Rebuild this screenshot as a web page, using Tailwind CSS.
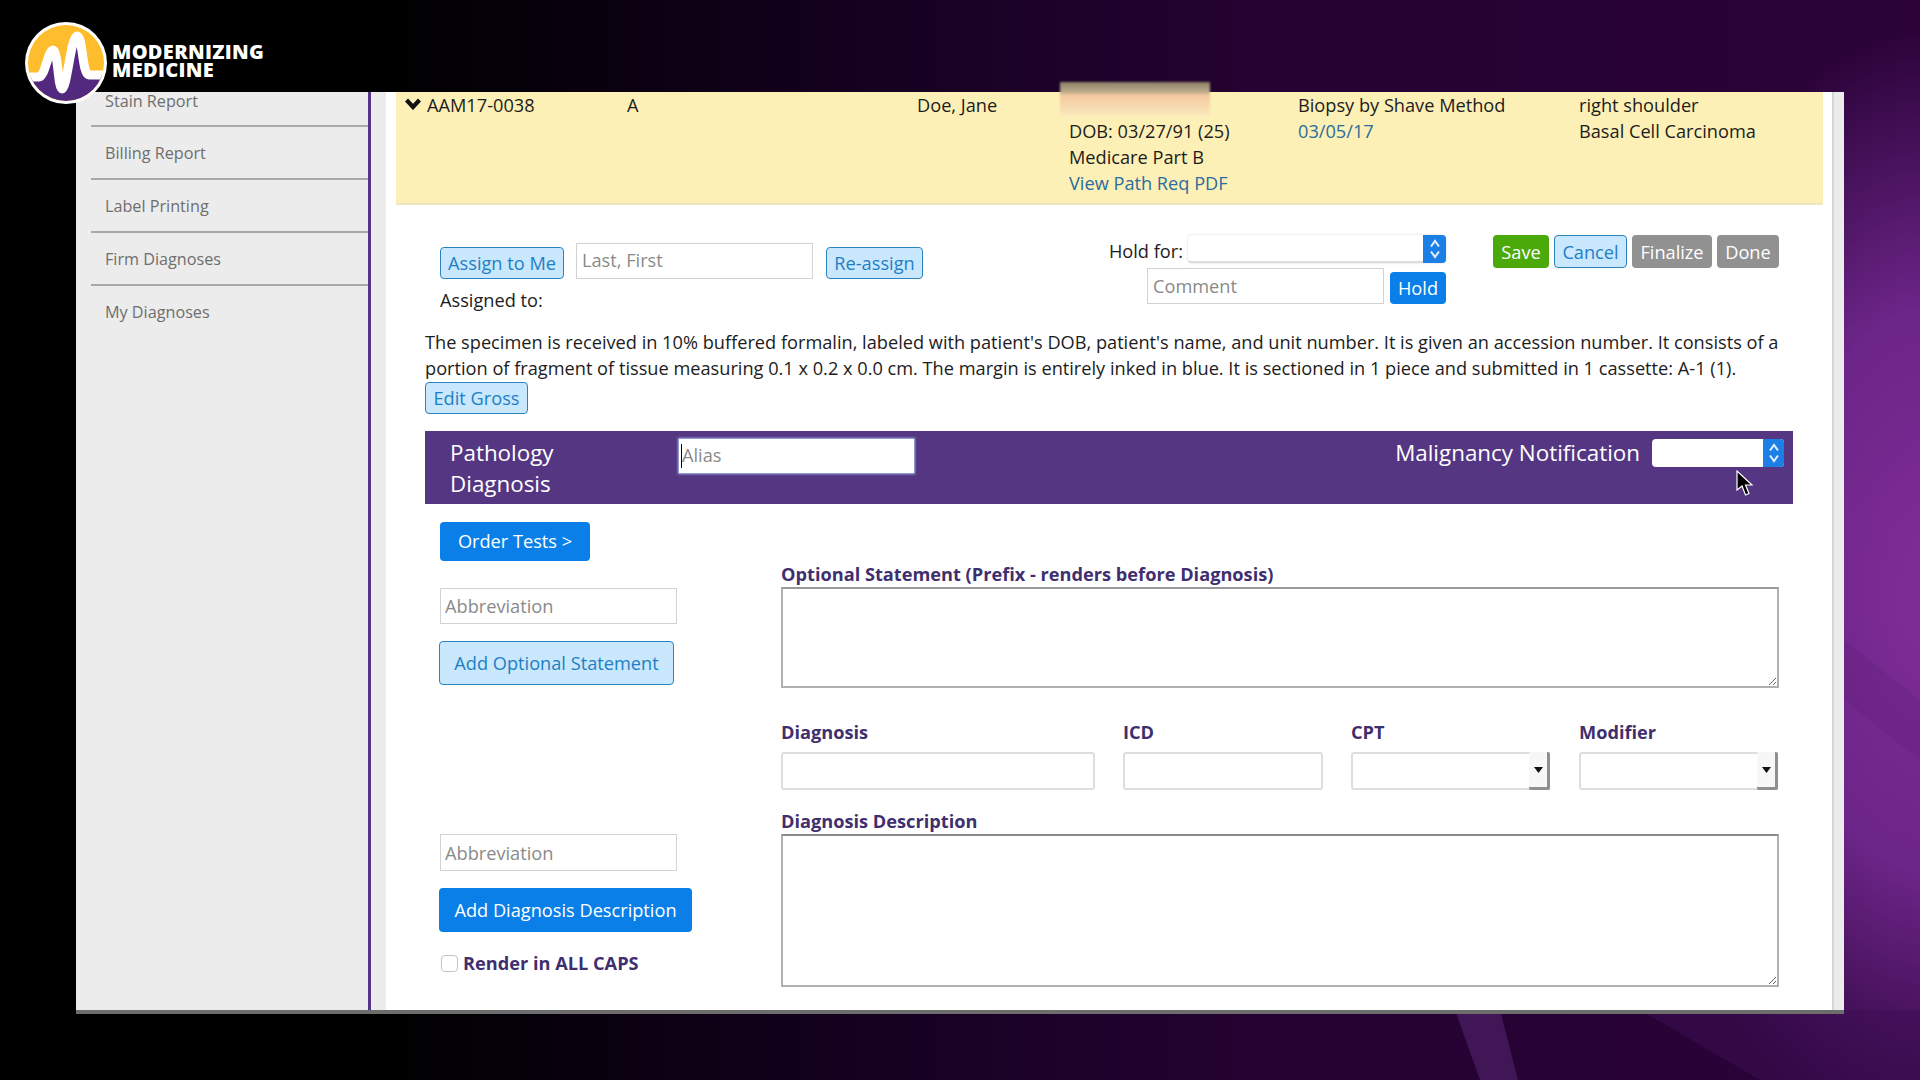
<!DOCTYPE html>
<html lang="en">
<head>
  <meta charset="UTF-8" />
  <meta name="viewport" content="width=device-width, initial-scale=1.0"/>
  <title>Pathology Diagnosis</title>
  <script src="https://cdn.jsdelivr.net/npm/@tailwindcss/browser@4"></script>
</head>
<body class="relative w-[1920px] h-[1080px] overflow-hidden font-['Open_Sans',sans-serif] text-[18.2px] leading-[26px] text-[#1c1c1c] bg-[radial-gradient(ellipse_300px_560px_at_1930px_590px,#7f2d98_0%,#6c2588_50%,transparent_100%),linear-gradient(90deg,#000_0%,#000_20%,#150120_45%,#240231_65%,#2b0339_100%)]">

  <!-- wallpaper streaks -->
  <svg class="absolute left-0 top-0" width="1920" height="1080" viewBox="0 0 1920 1080" fill="none">
    <polygon points="1455,1010 1500,1010 1518,1080 1480,1080" fill="#401656"/>
    <polygon points="1640,1010 1920,1010 1920,1080 1760,1080" fill="#3c0e54" opacity="0.5"/>
    <polygon points="1844,520 1920,440 1920,560 1844,640" fill="#7a2d92" opacity="0.25"/>
    <polygon points="1844,640 1920,700 1920,760 1844,700" fill="#5e2078" opacity="0.3"/>
  </svg>

  <!-- window -->
  <div class="relative ml-[76px] pt-[92px] w-[1768px] h-[1014px]">
    <div class="flex h-[922px] border-b-4 border-[#6d6d6d] bg-white">

      <!-- sidebar -->
      <div class="w-[292px] shrink-0 bg-[#ececec] pl-[15px] text-[16.2px] text-[#6e6e6e]">
        <div class="h-[35px] pl-[14px] border-b-2 border-[#a9a9a9] leading-[18px]">Stain Report</div>
        <div class="h-[53px] pl-[14px] flex items-center border-b-2 border-[#a9a9a9]">Billing Report</div>
        <div class="h-[53px] pl-[14px] flex items-center border-b-2 border-[#a9a9a9]">Label Printing</div>
        <div class="h-[53px] pl-[14px] flex items-center border-b-2 border-[#a9a9a9]">Firm Diagnoses</div>
        <div class="h-[52px] pl-[14px] flex items-center">My Diagnoses</div>
      </div>
      <div class="w-[3px] shrink-0 bg-[#553682]"></div>
      <div class="w-[15px] shrink-0 bg-[#ececec]"></div>

      <!-- main -->
      <div class="w-[1446px] shrink-0 overflow-hidden">
        <!-- case banner -->
        <div class="ml-[10px] w-[1427px] h-[113px] pl-[9px] flex bg-[#fdf0b6] border-b-2 border-[#efe6bd]">
          <div class="w-[222px] flex items-start">
            <svg class="mt-[6px] mr-[6px]" width="16" height="12" viewBox="0 0 16 12"><path d="M1.5 2 L8 9 L14.5 2" fill="none" stroke="#111" stroke-width="4.2"/></svg>
            <span>AAM17-0038</span>
          </div>
          <div class="w-[290px]">A</div>
          <div class="w-[152px]">Doe, Jane</div>
          <div class="w-[229px] pt-[26px]">
            <div>DOB: 03/27/91 (25)</div>
            <div>Medicare Part B</div>
            <div class="text-[#2a6d9e]">View Path Req PDF</div>
          </div>
          <div class="w-[281px]">
            <div>Biopsy by Shave Method</div>
            <div class="text-[#2a6d9e]">03/05/17</div>
          </div>
          <div>
            <div>right shoulder</div>
            <div>Basal Cell Carcinoma</div>
          </div>
        </div>

        <!-- assign / hold / actions -->
        <div class="mt-[30px] h-[94px] pl-[54px] flex items-start">
          <div class="w-[483px] pt-[8px]">
            <div class="flex items-end">
              <button class="w-[124px] h-[32px] rounded bg-[#c9e7fd] border border-[#2b84bd] text-[#1e7fc4]">Assign to Me</button>
              <input class="ml-[12px] w-[237px] h-[36px] px-[5px] pb-[2px] bg-white border border-[#d2d2d2] outline-none placeholder:text-[#8a8a8a]" placeholder="Last, First" />
              <button class="ml-[13px] w-[97px] h-[32px] rounded bg-[#c9e7fd] border border-[#2b84bd] text-[#1e7fc4]">Re-assign</button>
            </div>
            <div class="mt-[8px]">Assigned to:</div>
          </div>
          <div class="ml-[185px] w-[338px]">
            <div class="flex justify-end items-center h-[28px]">
              <span class="mr-[5px] mt-[3px]">Hold for:</span>
              <div class="w-[258px] h-[28px] flex rounded-[4px] bg-white border-b-2 border-[#dcdcdc] shadow-[0_0_2px_#c8c8c8]">
                <div class="flex-1"></div>
                <div class="w-[23px] -mb-[2px] rounded-r-[4px] bg-[#1c7fe6] flex items-center justify-center">
                  <svg width="14" height="24" viewBox="0 0 14 24" fill="none" stroke="#e4f0ff" stroke-width="2"><path d="M3 9.5 L7 4 L11 9.5"/><path d="M3 14.5 L7 20 L11 14.5"/></svg>
                </div>
              </div>
            </div>
            <div class="mt-[5px] flex justify-end items-end">
              <input class="w-[237px] h-[36px] px-[5px] bg-white border border-[#d2d2d2] outline-none placeholder:text-[#8a8a8a]" placeholder="Comment" />
              <button class="ml-[6px] w-[56px] h-[32px] rounded bg-[#0a7fe8] text-white">Hold</button>
            </div>
          </div>
          <div class="ml-[47px] flex gap-[5px]">
            <button class="w-[56px] h-[33px] rounded bg-[#4ca90a] text-white">Save</button>
            <button class="w-[73px] h-[33px] rounded bg-[#c9e7fd] border border-[#2b84bd] text-[#1e7fc4]">Cancel</button>
            <button class="w-[80px] h-[33px] rounded bg-[#919191] text-white">Finalize</button>
            <button class="w-[62px] h-[33px] rounded bg-[#919191] text-white">Done</button>
          </div>
        </div>

        <!-- gross description -->
        <div class="ml-[39px] w-[1368px] whitespace-nowrap text-[#1c1c1c]">
          The specimen is received in 10% buffered formalin, labeled with patient's DOB, patient's name, and unit number. It is given an accession number. It consists of a<br/>
          portion of fragment of tissue measuring 0.1 x 0.2 x 0.0 cm. The margin is entirely inked in blue. It is sectioned in 1 piece and submitted in 1 cassette: A-1 (1).
        </div>
        <button class="ml-[39px] mt-[1px] block w-[103px] h-[32px] rounded bg-[#c9e7fd] border border-[#2b84bd] text-[#1e7fc4]">Edit Gross</button>

        <!-- pathology diagnosis bar -->
        <div class="ml-[39px] mt-[17px] w-[1368px] h-[73px] flex items-start bg-[#553682] text-white text-[22.4px] leading-[31px]">
          <div class="w-[254px] pl-[25px] pt-[6px]">Pathology<br/>Diagnosis</div>
          <div class="mt-[8px] w-[235px] h-[34px] flex items-center bg-white shadow-[0_0_2px_1px_#a9c6f5]">
            <span class="w-px h-[24px] ml-[2px] bg-black"></span>
            <input class="w-[220px] pb-[2px] text-[18.2px] text-[#1c1c1c] outline-none placeholder:text-[#8a8a8a]" placeholder="Alias" />
          </div>
          <div class="ml-auto mt-[6px] mr-[9px] flex items-start">
            <span class="mr-[12px]">Malignancy Notification</span>
            <div class="mt-[2px] w-[132px] h-[28px] flex rounded-[4px] bg-white">
              <div class="flex-1"></div>
              <div class="w-[21px] rounded-r-[4px] bg-[#1c7fe6] flex items-center justify-center">
                <svg width="14" height="24" viewBox="0 0 14 24" fill="none" stroke="#e4f0ff" stroke-width="2"><path d="M3 9.5 L7 4 L11 9.5"/><path d="M3 14.5 L7 20 L11 14.5"/></svg>
              </div>
            </div>
          </div>
        </div>

        <!-- diagnosis form -->
        <div class="flex items-start pl-[53px]">
          <div class="w-[342px] pt-[18px]">
            <button class="ml-[1px] block w-[150px] h-[39px] pb-[2px] rounded bg-[#0a7fe8] text-white">Order Tests &gt;</button>
            <input class="mt-[27px] ml-[1px] block w-[237px] h-[36px] px-[4px] bg-white border border-[#d2d2d2] outline-none placeholder:text-[#8a8a8a]" placeholder="Abbreviation" />
            <button class="mt-[17px] block w-[235px] h-[44px] rounded bg-[#c9e7fd] border border-[#2b84bd] text-[#1e7fc4]">Add Optional Statement</button>
            <input class="mt-[149px] ml-[1px] block w-[237px] h-[37px] px-[4px] bg-white border border-[#d2d2d2] outline-none placeholder:text-[#8a8a8a]" placeholder="Abbreviation" />
            <button class="mt-[17px] block w-[253px] h-[44px] rounded bg-[#0a7fe8] text-white">Add Diagnosis Description</button>
            <label class="mt-[18px] ml-[2px] flex items-center font-bold text-[#3f2f6e]">
              <input type="checkbox" class="w-[17px] h-[17px] mr-[5px] appearance-none rounded-[4px] bg-white border border-[#c4c4c4]" />
              Render in ALL CAPS
            </label>
          </div>
          <div class="w-[998px] pt-[58px] font-bold text-[#3f2f6e] leading-[24px]">
            <div>Optional Statement (Prefix - renders before Diagnosis)</div>
            <textarea class="mt-[1px] block w-[998px] h-[101px] bg-white border-2 border-[#b0b0b0] border-t-[#9a9a9a] outline-none"></textarea>
            <div class="mt-[32px] flex">
              <div class="w-[342px]">
                <div>Diagnosis</div>
                <input class="mt-[8px] block w-[314px] h-[38px] rounded-[3px] bg-white border-2 border-[#dedede] outline-none" />
              </div>
              <div class="w-[228px]">
                <div>ICD</div>
                <input class="mt-[8px] block w-[200px] h-[38px] rounded-[3px] bg-white border-2 border-[#dedede] outline-none" />
              </div>
              <div class="w-[228px]">
                <div>CPT</div>
                <div class="relative mt-[8px] w-[199px] h-[38px] rounded-[3px] bg-white border-2 border-[#dedede]">
                  <div class="absolute right-[-2px] top-[-2px] w-[21px] h-[38px] flex items-center justify-center bg-[#f7f7f7] border-r-[3px] border-b-[3px] border-[#8f8f8f] rounded-[2px]">
                    <svg width="9" height="6" viewBox="0 0 9 6"><polygon points="0,0 9,0 4.5,6" fill="#111"/></svg>
                  </div>
                </div>
              </div>
              <div>
                <div>Modifier</div>
                <div class="relative mt-[8px] w-[199px] h-[38px] rounded-[3px] bg-white border-2 border-[#dedede]">
                  <div class="absolute right-[-2px] top-[-2px] w-[21px] h-[38px] flex items-center justify-center bg-[#f7f7f7] border-r-[3px] border-b-[3px] border-[#8f8f8f] rounded-[2px]">
                    <svg width="9" height="6" viewBox="0 0 9 6"><polygon points="0,0 9,0 4.5,6" fill="#111"/></svg>
                  </div>
                </div>
              </div>
            </div>
            <div class="mt-[19px]">Diagnosis Description</div>
            <textarea class="mt-[1px] block w-[998px] h-[153px] bg-white border-2 border-[#b0b0b0] border-t-[#8a8a8a] outline-none"></textarea>
          </div>
        </div>
      </div>

      <!-- scrollbar track -->
      <div class="w-[12px] shrink-0 bg-[#ececec] border-l-2 border-[#d6d6d6]"></div>
    </div>
  </div>

  <!-- logo -->
  <div class="absolute left-[25px] top-[22px] flex items-center">
    <svg width="82" height="82" viewBox="0 0 82 82">
      <defs><clipPath id="disc"><circle cx="41" cy="41" r="38"/></clipPath></defs>
      <circle cx="41" cy="41" r="41" fill="#fff"/>
      <g clip-path="url(#disc)">
        <rect width="82" height="82" fill="#fdbd2c"/>
        <path d="M0 55 L14 55 C20 55 23 28 28 28 C33 28 33 67 37 67 C42 67 46 14 52 14 C58 14 57 53 64 53 L82 53 L82 82 L0 82 Z" fill="#53297f"/>
        <path d="M-2 55 L14 55 C20 55 23 28 28 28 C33 28 33 67 37 67 C42 67 46 14 52 14 C58 14 57 53 64 53 L84 53" fill="none" stroke="#fff" stroke-width="9" stroke-linejoin="round"/>
      </g>
    </svg>
    <div class="ml-[5px] mt-[-5px] text-[20px] leading-[18px] font-extrabold tracking-[0.3px] text-white">MODERNIZING<br/>MEDICINE</div>
  </div>

  <!-- redacted patient name -->
  <div class="absolute left-[1060px] top-[82px] w-[150px] h-[34px] bg-[linear-gradient(180deg,#8d8166_0%,#b8a98a_28%,#f4c9a0_40%,#fbe9bd_100%)] blur-[1px]"></div>

  <!-- mouse cursor -->
  <svg class="absolute left-[1735px] top-[470px]" width="20" height="28" viewBox="0 0 20 28">
    <path d="M2 1 L2 20 L7 16 L10.5 25 L14 23.5 L10.5 15 L17 15 Z" fill="#000" stroke="#fff" stroke-width="1.2"/>
  </svg>
</body>
</html>
